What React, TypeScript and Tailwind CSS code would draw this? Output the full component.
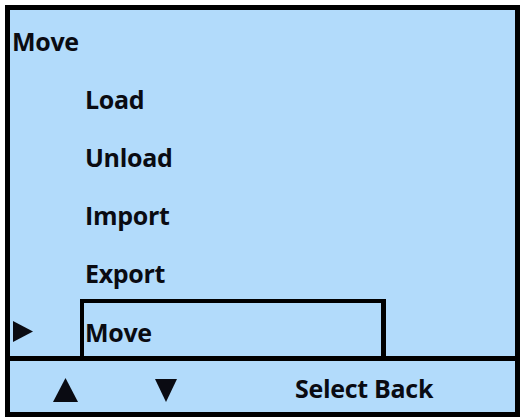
import React from 'react';

const items = ['Load', 'Unload', 'Import', 'Export'];

const App: React.FC = () => {
  return (
    <div className="w-[520px] h-[417px] bg-white pt-[5px] pl-[5px]">
      <div
        className="w-[515px] h-[412px] border-[5px] border-black bg-[#b2dbfb] text-[#0a0b12] flex flex-col text-[25px] font-bold tracking-[-0.3px]"
        style={{ fontFamily: '"Open Sans", "Liberation Sans", sans-serif' }}
      >
        <div className="flex-1 flex flex-col">
          <div className="h-[57px] pt-[15px] pl-[2px] leading-[32px]">Move</div>
          {items.map((label) => (
            <div key={label} className="h-[58px] pt-[16px] pl-[75px] leading-[32px]">
              {label}
            </div>
          ))}
          <div className="h-[57px] flex">
            <div className="w-[70px] flex items-start pt-[22px] pl-[3px]">
              <svg width="20" height="21" viewBox="0 0 20 21">
                <polygon points="0,0 20,10.5 0,21" fill="#0a0b12" />
              </svg>
            </div>
            <div className="w-[306px] h-[57px] border-t-4 border-l-4 border-r-[5px] border-black pt-[13px] pl-[1px] leading-[32px]">
              Move
            </div>
          </div>
        </div>
        <div className="h-[56px] border-t-[5px] border-black flex">
          <div className="pl-[43px] pt-[17px]">
            <svg width="25" height="24" viewBox="0 0 25 24">
              <polygon points="12.5,0 25,24 0,24" fill="#0a0b12" />
            </svg>
          </div>
          <div className="pl-[77px] pt-[18px]">
            <svg width="22" height="23" viewBox="0 0 22 23">
              <polygon points="0,0 22,0 11,23" fill="#0a0b12" />
            </svg>
          </div>
          <div className="pl-[118px] pt-[11px] leading-[32px]">Select Back</div>
        </div>
      </div>
    </div>
  );
};

export default App;
